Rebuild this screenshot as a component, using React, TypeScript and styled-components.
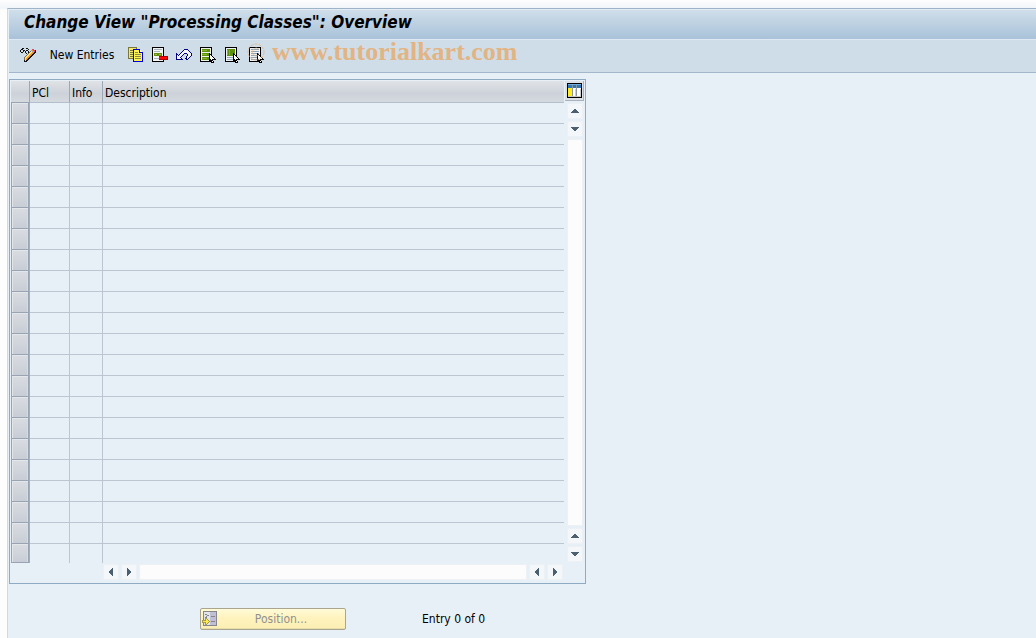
import React from 'react';
import styled, { createGlobalStyle, css } from 'styled-components';

const GlobalStyle = createGlobalStyle`
  * { box-sizing: border-box; }
  body {
    margin: 0;
    background: #fff;
    color: #000;
    font-family: 'DejaVu Sans Condensed', 'DejaVu Sans', sans-serif;
    font-size: 12px;
    line-height: 16px;
  }
`;

const Page = styled.div`
  min-height: 100vh;
  padding: 8px 0 0 7px;
  background: linear-gradient(#fdfdfe, #f1f5f9 8px, #fdfdfe 10px);
`;

const Window = styled.main`
  min-height: calc(100vh - 8px);
  border-left: 1px solid #ccd9e6;
  border-top: 1px solid #9db3c8;
  background: #e8f0f7;
`;

const TitleBar = styled.header`
  height: 31px;
  margin-left: 1px;
  padding: 3px 15px 0;
  border-top: 1px solid #e4edf4;
  border-bottom: 1px solid #dfe9f1;
  background: linear-gradient(#cfdeea, #a9c2d9);
`;

const Title = styled.h1`
  margin: 0;
  font-size: 17px;
  line-height: 18px;
  font-weight: bold;
  font-style: italic;
`;

const Toolbar = styled.div`
  position: relative;
  display: flex;
  align-items: center;
  height: 33px;
  margin-left: 1px;
  padding: 0 7px 2px;
  border-bottom: 1px solid #a2b7cc;
  background: #cfdde8;
`;

const ToolButton = styled.button<{ $wide?: boolean }>`
  display: flex;
  align-items: center;
  justify-content: center;
  width: ${(p) => (p.$wide ? '84px' : '24px')};
  height: 24px;
  padding: 0;
  border: 0;
  background: transparent;
  color: #000;
  font: inherit;
  white-space: nowrap;
`;

const Watermark = styled.div`
  position: absolute;
  left: 237px;
  top: 0;
  display: flex;
  align-items: center;
  gap: 6px;
  color: #e2b484;
  font-family: 'Liberation Serif', serif;
  font-size: 26px;
  line-height: 24px;
  font-weight: bold;
  pointer-events: none;
`;

const Panel = styled.section`
  display: grid;
  grid-template-columns: minmax(0, 1fr) 21px;
  width: 577px;
  max-width: 100%;
  margin: 6px 0 0 1px;
  padding: 1px 0 1px 1px;
  border: 1px solid #8fabc4;
`;

const Grid = styled.table`
  width: 100%;
  table-layout: fixed;
  border-collapse: separate;
  border-spacing: 0;
`;

const HeadCell = styled.th<{ $width?: number }>`
  width: ${(p) => (p.$width ? `${p.$width}px` : 'auto')};
  height: 22px;
  padding: 2px 2px 0;
  border-right: 1px solid #9ba8b6;
  border-bottom: 1px solid #b4bfcd;
  background: linear-gradient(#e0e3e6, #cdd2da 60%, #d5dadf);
  font-weight: normal;
  text-align: left;
  &:first-child { border-bottom-color: #98a4b3; }
  &:last-child { border-right: 0; }
`;

const Cell = styled.td`
  height: 21px;
  padding: 0;
  border-right: 1px solid #bcc6d3;
  border-bottom: 1px solid #bcc6d3;
  &:last-child { border-right: 0; }
  tr:last-child > & { height: 19px; border-bottom: 0; }
`;

const SelectCell = styled(Cell)`
  border-right-color: #a3afbd;
  tr > &, tr:last-child > & { border-bottom: 0; }
`;

const RowSelector = styled.button<{ $last: boolean }>`
  display: block;
  width: 18px;
  height: ${(p) => (p.$last ? '19px' : '21px')};
  padding: 0;
  border: 1px solid #98a4b3;
  border-top-width: 0;
  background: linear-gradient(#d9dce1, #c8cdd6);
  box-shadow: inset 1px 1px #e4e7ea, inset -1px 0 #d8dce1;
`;

const Side = styled.div`
  display: flex;
  flex-direction: column;
  align-items: center;
`;

const ConfigButton = styled.button`
  width: 19px;
  height: 20px;
  padding: 2px 1px;
  border: 0;
  border-right: 1px solid #a9b2bc;
  border-bottom: 1px solid #a9b2bc;
  background: #dde1e5;
  display: flex;
  justify-content: center;
`;

const scrollPart = css`
  border: 1px solid #edf1f5;
  background: #f4f7fa;
`;

const ScrollButton = styled.button`
  ${scrollPart}
  display: flex;
  align-items: center;
  justify-content: center;
  flex: none;
  width: 16px;
  height: 16px;
  padding: 0;
`;

const VerticalScroll = styled.div`
  display: flex;
  flex: 1;
  flex-direction: column;
  gap: 2px;
  margin: 2px 0 1px;
`;

const HorizontalScroll = styled.div`
  display: flex;
  gap: 2px;
  padding: 1px 1px 2px 92px;
`;

const Track = styled.div`
  ${scrollPart}
  flex: 1;
  background: #fcfcfc;
`;

const Footer = styled.footer`
  display: flex;
  align-items: center;
  gap: 76px;
  padding: 24px 0 8px 192px;
`;

const PositionButton = styled.button`
  display: flex;
  align-items: center;
  width: 146px;
  height: 22px;
  padding: 0 1px;
  border: 1px solid #aaa58e;
  border-radius: 2px;
  background: linear-gradient(#fffbd8, #fff3bd 45%, #fceeb4);
  box-shadow: inset 0 -1px #e8dca8;
  color: #8f9190;
  font: inherit;
`;

const PositionLabel = styled.span`
  flex: 1;
  text-align: center;
`;

const Icon = ({ children, size = 16 }: { children: React.ReactNode; size?: number }) => (
  <svg width={size} height={size} viewBox={`0 0 ${size} ${size}`} shapeRendering="crispEdges" aria-hidden="true">
    {children}
  </svg>
);

const Cursor = () => (
  <>
    <path d="M9 6h1v1h1v1h1v1h1v1h1v1h1v1h1v1h-3v1h1v2h-3v-2h-1v1H9z" fill="#000" />
    <path d="M10 8h1v1h1v1h1v1h1v1h-2v2h1v1h-1v-2h-1v-1h-1z" fill="#fff" />
  </>
);

const EditIcon = () => (
  <Icon>
    <path d="M1 2h2v1H1zM0 3h1v2H0zM1 5h2v1H1zM3 3h1v2H3zM4 3h1v1H4zM5 4h1v2H5zM6 3h2v1H6zM6 6h1v1H6zM8 4h1v2H8zM2 1h2v1H2zM6 1h2v1H6zM8 2h1v1H8z" fill="#111" />
    <path d="M15 3h1v3h-1v1h-1v1h-1v1h-1v1h-1v1h-1v1H9v1H8v1H7v1H4v-2h1v1h1v-1h1v-1h1v-1h1v-1h1V9h1V8h1V7h1V6h1V5h1z" fill="#18181c" />
    <path d="M12 3h1v1h1v2h-1v1h-1v1h-1v1h-1v1H9v1H8v1H7v1H6v-2h1v-1h1V9h1V8h1V7h1V6h1z" fill="#f59a1c" />
    <path d="M11 3h1v3h-1v1h-1v1H9v1H8v1H7v1H6v1H5v-2h1V9h1V8h1V7h1V6h1V5h1z" fill="#ffdf86" />
    <path d="M10 4h1v1h-1zM9 5h1v1H9zM8 6h1v1H8zM7 7h1v1H7zM6 8h1v1H6zM5 9h1v1H5zM4 10h1v3H4z" fill="#77704e" />
    <path d="M12 2h2v1h1v2h-1V4h-1V3h-1z" fill="#d84a62" />
    <path d="M11 3h1v1h1v1h1v1h-1V5h-1V4h-1z" fill="#93a3dd" />
  </Icon>
);

const CopyIcon = () => (
  <Icon>
    <path d="M.5 .5h8v11h-8z" fill="#f0e870" stroke="#7b7738" />
    <path d="M2 3.500h3M2 5.500h3M2 7.500h3M2 9.500h3" stroke="#77773b" />
    <path d="M5.500 2.500h6l3 3v9h-9z" fill="#fff450" stroke="#0000d8" />
    <path d="M11.500 2.500v3h3" fill="#fff" stroke="#0000d8" />
    <path d="M7 5.500h3M7 7.500h6M7 9.500h6M7 11.500h6" stroke="#8d8a48" />
  </Icon>
);

const DeleteIcon = () => (
  <Icon>
    <path d="M.5 .5h11v14H.5z" fill="#f3f5f2" stroke="#000" />
    <path d="M2 2.500h8M2 4.500h6M2 11.500h5" stroke="#a8b4bd" />
    <path d="M2 6h8v3H2z" fill="#658f10" />
    <path d="M3 7h2v1H3zM7 7h2v1H7z" fill="#9bbd40" />
    <path d="M7 9h9v4H7z" fill="#b40000" />
    <path d="M7 10h8v2H7z" fill="#ff0b0b" />
  </Icon>
);

const UndoIcon = () => (
  <Icon>
    <path d="M.5 6.500v6h6l-2-2 4-4h2l1 1v1l-2 3 2 1 4-4v-2l-4-4h-3l-6 6z" fill="#f4f6fb" stroke="#000086" />
  </Icon>
);

const SelectAllIcon = () => (
  <Icon>
    <path d="M.5 .5h11v14H.5z" fill="#eef2ea" stroke="#000" />
    <path d="M2 2h8v3H2zM2 6h8v3H2zM2 10h8v3H2z" fill="#5d8e0c" />
    <path d="M2 3h5v1H2zM2 7h5v1H2zM2 11h5v1H2z" fill="#88b830" />
    <Cursor />
  </Icon>
);

const SelectBlockIcon = () => (
  <Icon>
    <path d="M1.500 .5h11v14h-11z" fill="#eef2f4" stroke="#000" />
    <path d="M3 2h8v7H3z" fill="#5d8e0c" />
    <path d="M3 3h1v5H3zM5 3h1v5H5z" fill="#84ae2c" />
    <path d="M3 10.500h7M3 12.500h7" stroke="#91a8b8" />
    <Cursor />
  </Icon>
);

const DeselectIcon = () => (
  <Icon>
    <path d="M1.500 .5h11v14h-11z" fill="#f1f2f2" stroke="#000" />
    <path d="M3 2.500h8M3 4.500h8M3 6.500h8M3 8.500h7M3 10.500h7M3 12.500h7" stroke="#8fa3b4" />
    <Cursor />
  </Icon>
);

const ConfigIcon = () => (
  <Icon size={15}>
    <path d="M0 0h15v15H0z" />
    <path d="M1 1h13v13H1z" fill="#fff" />
    <path d="M1 1h13v4H1z" fill="#2f78b8" />
    <path d="M1 1h13v1H1z" fill="#72afe0" />
    <path d="M1 5h4v9H1z" fill="#ffed20" />
    <path d="M5 2h1v12H5zM9 2h1v12H9z" fill="#8b979d" />
    <path d="M8 6h1v8H8zM13 6h1v8h-1z" fill="#c8cdd2" />
    <path d="M1 13h13v1H1z" fill="#c5c7c0" />
  </Icon>
);

const PositionIcon = () => (
  <Icon>
    <path d="M1.500 .5h13v14h-13z" fill="#e3e6e8" stroke="#85878c" />
    <path d="M8 1h6v13H8z" fill="#c0bfd6" />
    <path d="M3 3h2v1H3zM5 4h2v1H5zM4 5h1v1H4zM3 6h2v1H3zM9 5h4v1H9zM9 10h4v1H9z" fill="#85858f" />
    <path d="M0 9h3V7h2v1h1v1h1v1h1v1H7v1H6v1H5v1H3v-2H0z" fill="#a39a55" />
    <path d="M1 10h3V8h1v1h1v1h1v1H6v1H5v1H4v-2H1z" fill="#ffec48" />
  </Icon>
);

type Direction = 'up' | 'down' | 'left' | 'right';

const arrows: Record<Direction, string> = {
  up: 'M4 3h2v1h1v1h1v1h1v1H1V6h1V5h1V4h1z',
  down: 'M1 3h8v1H8v1H7v1H6v1H4V6H3V5H2V4H1z',
  left: 'M7 1v8H6V8H5V7H4V6H3V4h1V3h1V2h1V1z',
  right: 'M3 1h1v1h1v1h1v1h1v2H6v1H5v1H4v1H3z',
};

const Scroll = ({ to }: { to: Direction }) => (
  <ScrollButton type="button" aria-label={`Scroll ${to}`}>
    <Icon size={10}><path d={arrows[to]} fill="#4b6070" /></Icon>
  </ScrollButton>
);

const tools = [
  { label: 'Copy As', Glyph: CopyIcon },
  { label: 'Delete', Glyph: DeleteIcon },
  { label: 'Undo Change', Glyph: UndoIcon },
  { label: 'Select All', Glyph: SelectAllIcon },
  { label: 'Select Block', Glyph: SelectBlockIcon },
  { label: 'Deselect All', Glyph: DeselectIcon },
];

const rows = Array.from({ length: 22 }, (_, i) => i);

export default function App() {
  return (
    <Page>
      <GlobalStyle />
      <Window>
        <TitleBar><Title>Change View "Processing Classes": Overview</Title></TitleBar>
        <Toolbar>
          <ToolButton type="button" aria-label="Display/Change"><EditIcon /></ToolButton>
          <ToolButton type="button" $wide>New Entries</ToolButton>
          {tools.map(({ label, Glyph }) => (
            <ToolButton key={label} type="button" aria-label={label}><Glyph /></ToolButton>
          ))}
          <Watermark>
            <svg width="20" height="20" viewBox="0 0 20 20" fill="none" stroke="#e2b484" aria-hidden="true">
              <circle cx="10" cy="10" r="8" strokeDasharray="3 1" opacity=".8" />
              <path d="M13 7a4 4 0 1 0 0 6" opacity=".6" />
            </svg>
            www.tutorialkart.com
          </Watermark>
        </Toolbar>
        <Panel>
          <Grid>
            <thead>
              <tr>
                <HeadCell $width={19} aria-label="Select" />
                <HeadCell $width={40}>PCl</HeadCell>
                <HeadCell $width={33}>Info</HeadCell>
                <HeadCell>Description</HeadCell>
              </tr>
            </thead>
            <tbody>
              {rows.map((row) => (
                <tr key={row}>
                  <SelectCell>
                    <RowSelector type="button" aria-label={`Select row ${row + 1}`} $last={row === rows.length - 1} />
                  </SelectCell>
                  <Cell /><Cell /><Cell />
                </tr>
              ))}
            </tbody>
          </Grid>
          <Side>
            <ConfigButton type="button" aria-label="Table settings"><ConfigIcon /></ConfigButton>
            <VerticalScroll>
              <Scroll to="up" />
              <Scroll to="down" />
              <Track />
              <Scroll to="up" />
              <Scroll to="down" />
            </VerticalScroll>
          </Side>
          <HorizontalScroll>
            <Scroll to="left" />
            <Scroll to="right" />
            <Track />
            <Scroll to="left" />
            <Scroll to="right" />
          </HorizontalScroll>
        </Panel>
        <Footer>
          <PositionButton type="button" disabled>
            <PositionIcon />
            <PositionLabel>Position...</PositionLabel>
          </PositionButton>
          <span>Entry 0 of 0</span>
        </Footer>
      </Window>
    </Page>
  );
}
